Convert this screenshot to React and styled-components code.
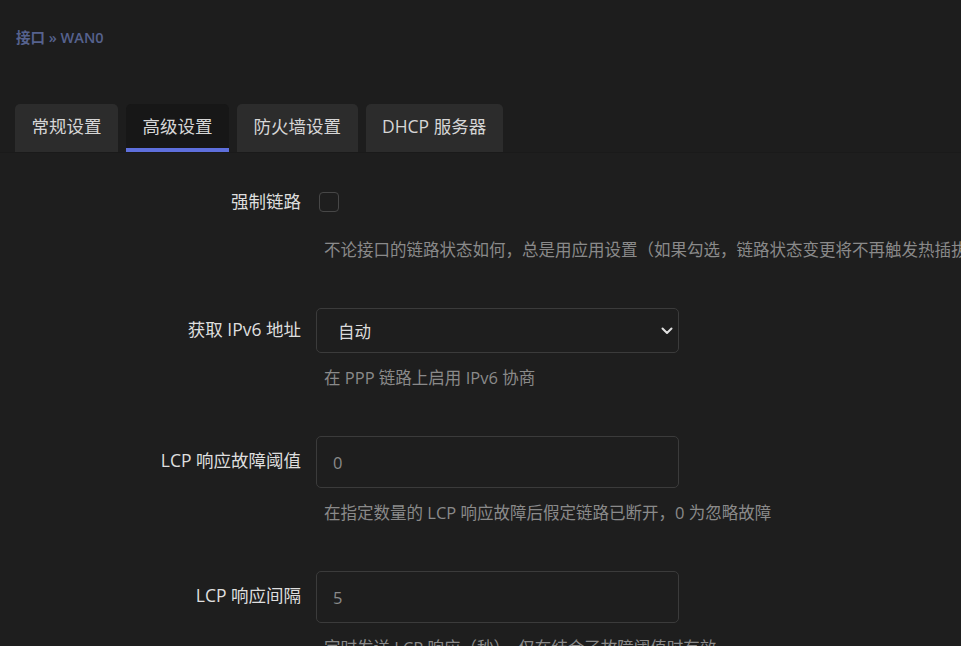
import React from "react";
import styled, { createGlobalStyle } from "styled-components";

const Global = createGlobalStyle`
  html, body {
    margin: 0;
    padding: 0;
    background: #1e1e1e;
    overflow: hidden;
  }
  body {
    font-family: "Open Sans", "Noto Sans CJK SC", sans-serif;
    color: #dcdcdc;
  }
`;

const Page = styled.div`
  width: 961px;
  height: 646px;
  overflow: hidden;
  display: flex;
  flex-direction: column;
`;

const Header = styled.div`
  background: #1d1d1d;
  padding: 28px 0 0 16px;
`;

const Crumb = styled.div`
  font-size: 14.5px;
  line-height: 20px;
  font-weight: 600;
  color: #56628e;
  height: 20px;
`;

const TabBar = styled.ul`
  list-style: none;
  margin: 56px 0 0 -1px;
  padding: 0;
  display: flex;
  gap: 8px;
`;

const Tab = styled.li`
  height: 48px;
  box-sizing: border-box;
  padding: 0 16.5px 1px;
  display: flex;
  align-items: center;
  font-size: 17.5px;
  color: #d6d6d6;
  border-radius: 5px 5px 0 0;
  background: ${(p) => (p.$active ? "#171717" : "#2c2c2c")};
  border-bottom: 4px solid ${(p) => (p.$active ? "#5e6fdc" : "transparent")};
  white-space: nowrap;
`;

const Content = styled.div`
  flex: 1;
  background: #1e1e1e;
  border-top: 1px solid #1a1a1a;
  padding-top: 27px;
  display: flex;
  flex-direction: column;
  gap: 46px;
`;

const Row = styled.div`
  display: grid;
  grid-template-columns: 301px 363px;
  column-gap: 15px;
  row-gap: 13px;
  align-items: center;
`;

const Label = styled.label`
  text-align: right;
  font-size: 17.5px;
  color: #dedede;
  white-space: nowrap;
  padding-bottom: 5px;
`;

const Control = styled.div`
  height: ${(p) => p.$h}px;
  display: flex;
  align-items: center;
  position: relative;
`;

const Check = styled.span`
  width: 20px;
  height: 20px;
  box-sizing: border-box;
  border: 1px solid #474747;
  border-radius: 4px;
  margin-left: 3px;
  margin-top: -2px;
`;

const Field = styled.div`
  width: 100%;
  height: 100%;
  box-sizing: border-box;
  border: 1px solid #3b3b3b;
  border-radius: 5px;
  display: flex;
  align-items: center;
  justify-content: space-between;
  padding: 0 5px 0 ${(p) => p.$pl}px;
  font-size: ${(p) => p.$fs}px;
  color: ${(p) => p.$c};
`;

const Desc = styled.div`
  grid-column: 2;
  padding-left: 8px;
  font-size: 16.5px;
  line-height: 24px;
  color: #8a8a8a;
  white-space: nowrap;
`;

const Chevron = () => (
  <svg width="12" height="8" viewBox="0 0 12 8" fill="none">
    <path d="M1.5 1.5 L6 6 L10.5 1.5" stroke="#e0e0e0" strokeWidth="2" strokeLinecap="round" strokeLinejoin="round" />
  </svg>
);

export default function App() {
  return (
    <Page>
      <Global />
      <Header>
        <Crumb>接口 » WAN0</Crumb>
        <TabBar>
          <Tab>常规设置</Tab>
          <Tab $active>高级设置</Tab>
          <Tab>防火墙设置</Tab>
          <Tab>DHCP 服务器</Tab>
        </TabBar>
      </Header>
      <Content>
        <Row>
          <Label>强制链路</Label>
          <Control $h={45}>
            <Check />
          </Control>
          <Desc>不论接口的链路状态如何，总是用应用设置（如果勾选，链路状态变更将不再触发热插拔事件）</Desc>
        </Row>
        <Row>
          <Label>获取 IPv6 地址</Label>
          <Control $h={45}>
            <Field $pl={21} $fs={16.5} $c="#dcdcdc">
              <span>自动</span>
              <Chevron />
            </Field>
          </Control>
          <Desc>在 PPP 链路上启用 IPv6 协商</Desc>
        </Row>
        <Row>
          <Label>LCP 响应故障阈值</Label>
          <Control $h={52}>
            <Field $pl={16} $fs={16.5} $c="#8a8a8a">0</Field>
          </Control>
          <Desc>在指定数量的 LCP 响应故障后假定链路已断开，0 为忽略故障</Desc>
        </Row>
        <Row>
          <Label>LCP 响应间隔</Label>
          <Control $h={52}>
            <Field $pl={16} $fs={16.5} $c="#8a8a8a">5</Field>
          </Control>
          <Desc>定时发送 LCP 响应（秒），仅在结合了故障阈值时有效</Desc>
        </Row>
      </Content>
    </Page>
  );
}
